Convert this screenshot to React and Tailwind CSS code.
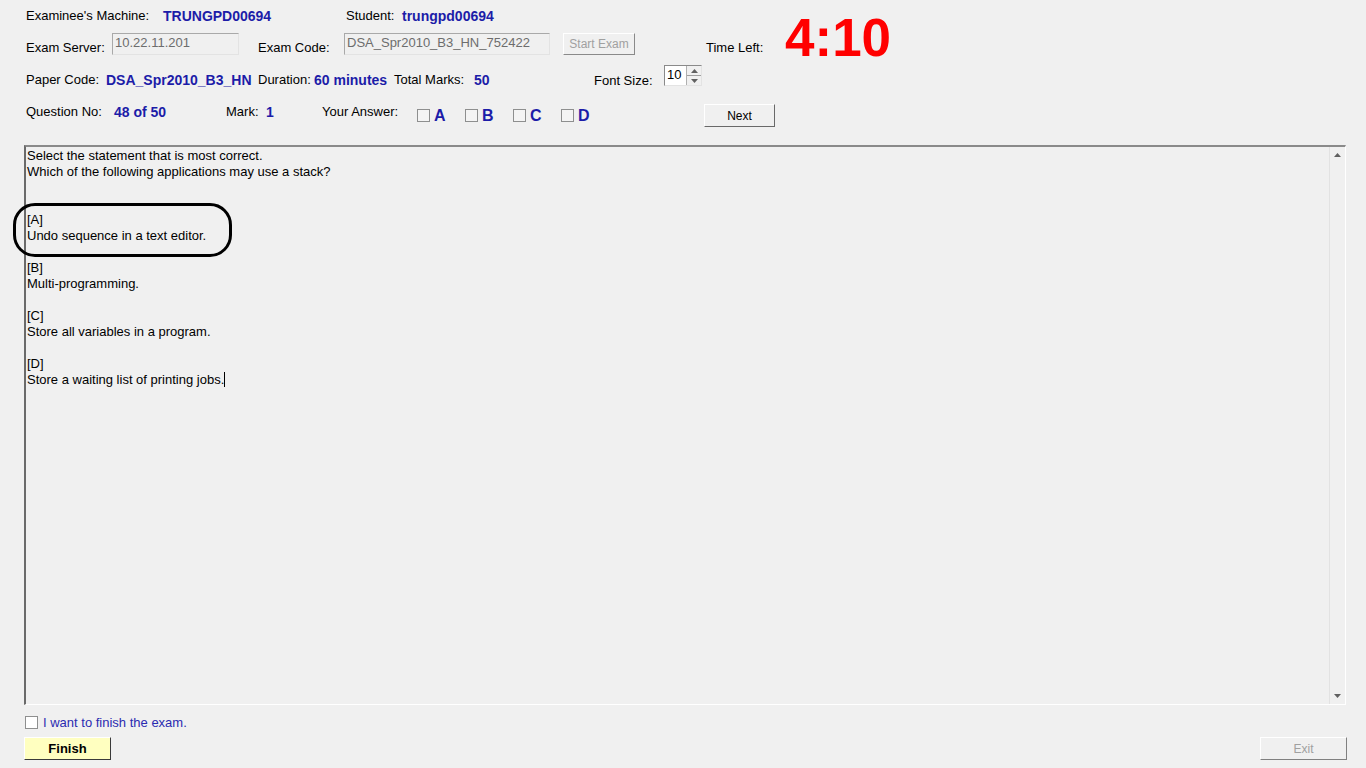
import React from 'react';

const blue = 'text-[#1c1ca8]';

function Box({ className = '' }) {
  return <span className={`inline-block w-[13px] h-[13px] border border-[#8e8f8f] bg-[#f4f4f4] shrink-0 ${className}`} />;
}

function Arrow({ down }) {
  return (
    <svg width="7" height="4" viewBox="0 0 7 4">
      <path d={down ? 'M0 0 L7 0 L3.5 4 Z' : 'M3.5 0 L7 4 L0 4 Z'} fill="#606060" />
    </svg>
  );
}

export default function App() {
  const lines = [
    'Select the statement that is most correct.',
    'Which of the following applications may use a stack?',
    '',
    '',
    '[A]',
    'Undo sequence in a text editor.',
    '',
    '[B]',
    'Multi-programming.',
    '',
    '[C]',
    'Store all variables in a program.',
    '',
    '[D]',
    'Store a waiting list of printing jobs.',
  ];

  return (
    <div className="w-[1366px] h-[768px] bg-[#f0f0f0] text-[13px] text-black overflow-hidden pt-[8px] px-[24px]" style={{ fontFamily: '"Liberation Sans", Arial, sans-serif' }}>
      {/* rows 1-2 with timer */}
      <div className="h-[57px] pl-[2px] flex items-start">
        <div className="w-[680px]">
          <div className="h-[16px] flex items-center leading-[16px]">
            <span className="w-[137px]">Examinee's Machine:</span>
            <span className={`w-[183px] font-bold text-[14px] ${blue}`}>TRUNGPD00694</span>
            <span className="w-[56px]">Student:</span>
            <span className={`font-bold text-[14px] ${blue}`}>trungpd00694</span>
          </div>
          <div className="mt-[9px] h-[22px] flex items-start leading-[16px]">
            <span className="w-[86px] mt-[7px]">Exam Server:</span>
            <div className="w-[127px] h-[22px] border border-[#a9a9a9] border-b-[#e3e3e3] border-r-[#e3e3e3] bg-[#f0f0f0] text-[#6d6d6d] pl-[2px] leading-[18px]">10.22.11.201</div>
            <span className="w-[86px] ml-[19px] mt-[7px]">Exam Code:</span>
            <div className="w-[206px] h-[22px] border border-[#a9a9a9] border-b-[#e3e3e3] border-r-[#e3e3e3] bg-[#f0f0f0] text-[#6d6d6d] pl-[2px] leading-[18px]">DSA_Spr2010_B3_HN_752422</div>
            <div className="ml-[13px] w-[72px] h-[22px] border border-white border-b-[#8a8a8a] border-r-[#8a8a8a] flex items-center justify-center text-[12px] text-[#a0a0a0]">Start Exam</div>
          </div>
        </div>
        <span className="w-[79px] mt-[32px] leading-[16px]">Time Left:</span>
        <span className="mt-[8px] h-[44px] leading-[44px] text-[53px] font-bold text-[#ff0000]">4:10</span>
      </div>

      {/* row 3 */}
      <div className="h-[39px] pl-[2px] flex items-start leading-[16px]">
        <span className="w-[80px] mt-[7px]">Paper Code:</span>
        <span className={`w-[152px] mt-[7px] font-bold text-[14px] ${blue}`}>DSA_Spr2010_B3_HN</span>
        <span className="w-[56px] mt-[7px]">Duration:</span>
        <span className={`w-[80px] mt-[7px] font-bold text-[14px] ${blue}`}>60 minutes</span>
        <span className="w-[80px] mt-[7px]">Total Marks:</span>
        <span className={`w-[120px] mt-[7px] font-bold text-[14px] ${blue}`}>50</span>
        <span className="w-[70px] mt-[8px]">Font Size:</span>
        <div className="w-[38px] h-[21px] border border-[#8a8a8a] border-b-[#e3e3e3] border-r-[#e3e3e3] bg-white flex items-stretch">
          <span className="flex-1 pl-[2px] leading-[18px]">10</span>
          <div className="w-[15px] flex flex-col border-l border-[#b0b0b0] bg-[#f0f0f0]">
            <div className="flex-1 flex items-center justify-center border-b border-[#a0a0a0]"><Arrow /></div>
            <div className="flex-1 flex items-center justify-center"><Arrow down /></div>
          </div>
        </div>
      </div>

      {/* row 4 */}
      <div className="h-[41px] pl-[2px] flex items-start leading-[16px]">
        <span className="w-[88px]">Question No:</span>
        <span className={`w-[112px] font-bold text-[14px] ${blue}`}>48 of 50</span>
        <span className="w-[40px]">Mark:</span>
        <span className={`w-[56px] font-bold text-[14px] ${blue}`}>1</span>
        <span className="w-[95px]">Your Answer:</span>
        {['A', 'B', 'C', 'D'].map((l) => (
          <div key={l} className="w-[48px] flex items-start">
            <Box className="mt-[5px]" />
            <span className={`ml-[4px] mt-[2px] text-[16px] leading-[20px] font-bold ${blue}`}>{l}</span>
          </div>
        ))}
        <div className="ml-[95px] w-[71px] h-[23px] border border-white border-b-[#696969] border-r-[#696969] flex items-center justify-center text-[12px]">Next</div>
      </div>

      {/* question text */}
      <div className="relative w-[1322px] h-[560px] flex border-t-2 border-t-[#8a8a8a] border-l-2 border-l-[#6a6a6a] border-b border-b-white border-r border-r-white">
        <div className="flex-1 pl-[1px] pt-[1px] leading-[16px]">
          {lines.map((t, i) => (
            <div key={i} className="h-[16px] whitespace-pre">
              {t}
              {i === lines.length - 1 && <span className="inline-block w-px h-[15px] bg-black align-[-3px]" />}
            </div>
          ))}
        </div>
        <div className="w-[16px] border-l border-[#e2e2e2] flex flex-col items-center justify-between py-[6px]">
          <Arrow />
          <Arrow down />
        </div>
        <div className="absolute left-[-13px] top-[56px] w-[219px] h-[54px] border-[3px] border-black rounded-[22px]" />
      </div>

      {/* finish */}
      <div className="mt-[11px] h-[13px] flex items-center pl-[1px]">
        <Box className="bg-white" />
        <span className="ml-[5px] text-[#2b2bb0] leading-[16px]">I want to finish the exam.</span>
      </div>
      <div className="mt-[8px] w-[1323px] flex justify-between">
        <div className="w-[87px] h-[23px] bg-[#ffffc0] border border-white border-b-[#3a3a3a] border-r-[#3a3a3a] flex items-center justify-center font-bold">Finish</div>
        <div className="w-[87px] h-[23px] border border-white border-b-[#808080] border-r-[#808080] flex items-center justify-center text-[12px] text-[#a0a0a0]">Exit</div>
      </div>
    </div>
  );
}
